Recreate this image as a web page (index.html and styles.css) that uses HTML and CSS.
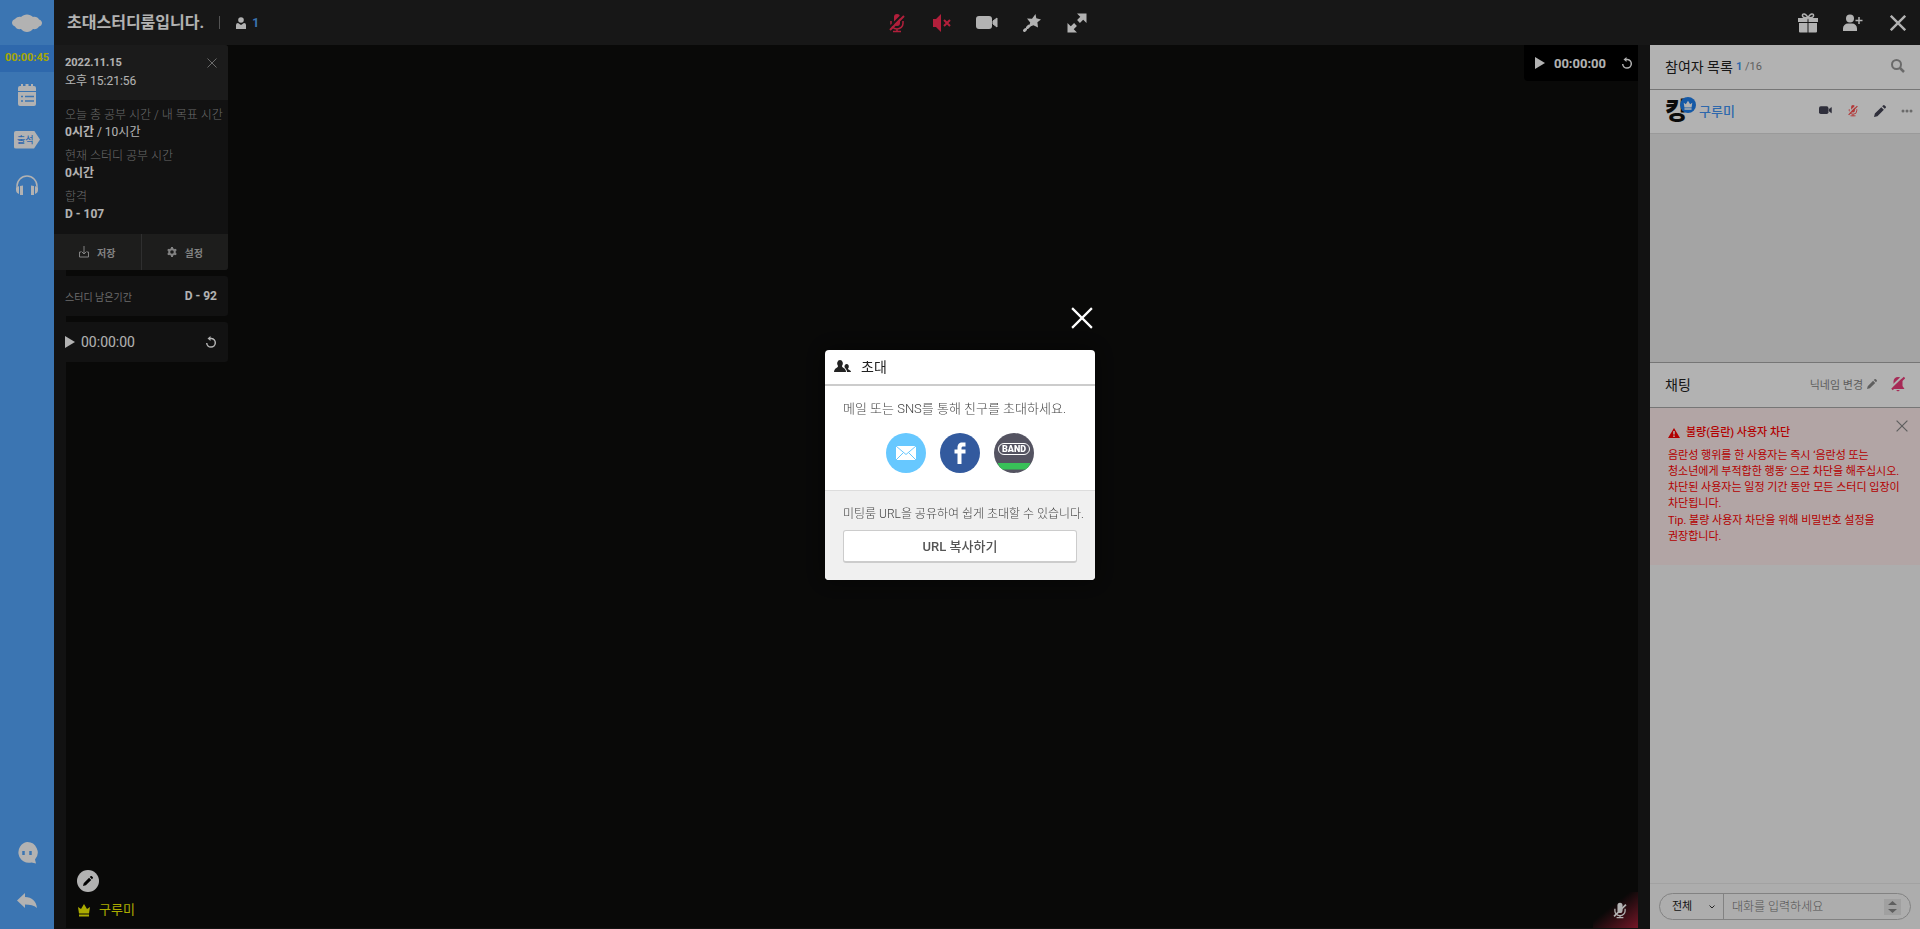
FILE: index.html
```
<!DOCTYPE html>
<html lang="ko">
<head>
    <meta charset="UTF-8">
    <meta name="viewport" content="width=device-width, initial-scale=1.0">
    <title>초대스터디룸입니다.</title>
    <link rel="stylesheet" href="styles.css">
</head>
<body>
    <!-- Shared icons -->
    <svg class="sprite" aria-hidden="true">
        <symbol id="mic-off" viewBox="0 0 16 20">
            <path d="M5 4a3 3 0 0 1 6 0v6a3 3 0 0 1-6 0z" fill="currentColor"/>
            <path d="M2 8v2.500a6 5.500 0 0 0 12 0V8M8 16v3M4 18.500h8" fill="none" stroke="currentColor" stroke-width="1.500"/>
            <path d="M0 15L14 1" stroke="var(--cut)" stroke-width="2"/>
            <path d="M1 17L15 3" stroke="currentColor" stroke-width="2"/>
        </symbol>
        <symbol id="camera" viewBox="0 0 22 14">
            <rect x="0" y="0" width="16" height="13" rx="3" fill="currentColor"/>
            <path d="M17 5l4-3v9l-4-3z" fill="currentColor" stroke="currentColor"/>
        </symbol>
        <symbol id="pencil" viewBox="0 0 14 14">
            <path d="M0 14l1-4 7.500-7.500 3 3L4 13zM9.500 1.500l1-1a1.500 1.500 0 0 1 2 0l1 1a1.500 1.500 0 0 1 0 2l-1 1z" fill="currentColor"/>
        </symbol>
        <symbol id="close" viewBox="0 0 20 20">
            <path d="M1 1l18 18M19 1L1 19" stroke="currentColor" stroke-width="var(--line, 2)" fill="none"/>
        </symbol>
        <symbol id="play" viewBox="0 0 10 12">
            <path d="M0 0l10 6-10 6z" fill="currentColor"/>
        </symbol>
        <symbol id="reset" viewBox="0 0 12 12">
            <path d="M4 2.500h2.500a4.300 4.300 0 1 1-4.800 4.500" fill="none" stroke="currentColor" stroke-width="1.500"/>
            <path d="M5.500 0v5L2.500 2.500z" fill="currentColor"/>
        </symbol>
        <symbol id="crown" viewBox="0 0 14 14">
            <path d="M1 4l3 2 3-5 3 5 3-2-1 6.500H2zM2 11.500h10V13.500H2z" fill="currentColor"/>
        </symbol>
    </svg>

    <div class="app">
        <!-- Left menu -->
        <nav class="sidebar">
            <a class="logo" href="#" aria-label="홈">
                <svg width="30" height="18" viewBox="0 0 30 18"><path d="M3 5c2-2 4-2.500 6-2 3-3.500 9-3.500 12 0 3-.5 5 .5 6 2.500 4 1 4 6 0 7-1 2-3.500 3-6 2.500-3 4-9 4-12 0-3 .5-5-.5-6-2.500-4-1.500-4-6 0-7.500z" fill="currentColor"/></svg>
            </a>
            <div class="elapsed">00:00:45</div>
            <div class="menu">
                <button aria-label="일정">
                    <svg width="18" height="22" viewBox="0 0 18 22">
                        <path d="M0 4a2 2 0 0 1 2-2h1V0h2v2h2.500V0h3v2H13V0h2v2h1a2 2 0 0 1 2 2v3H0zM0 8h18v12a2 2 0 0 1-2 2H2a2 2 0 0 1-2-2z" fill="currentColor"/>
                        <path d="M3 12.500h2M7 12.500h9M3 17h2M7 17h9" stroke="var(--cut)" stroke-width="1.500"/>
                    </svg>
                </button>
                <button class="attend"><span>출석</span></button>
                <button aria-label="음악">
                    <svg width="22" height="20" viewBox="0 0 22 20">
                        <path d="M1 15v-4a10 10 0 0 1 20 0v4" fill="none" stroke="currentColor" stroke-width="1.500"/>
                        <path d="M0 13l3-2v8c-2-1-3-2-3-4zM22 13l-3-2v8c2-1 3-2 3-4zM4 11l3-.500V20H4zM18 11l-3-.500V20h3z" fill="currentColor"/>
                    </svg>
                </button>
            </div>
            <div class="menu menu-bottom">
                <button aria-label="문의">
                    <svg width="22" height="22" viewBox="0 0 22 22">
                        <path d="M11 0a10.500 10.500 0 0 1 8 17.500l1 4-4.500-1A10.500 10.500 0 1 1 11 0z" fill="currentColor"/>
                        <path d="M7.500 9v4M14.500 9v4" stroke="var(--cut)" stroke-width="2.500"/>
                    </svg>
                </button>
                <button aria-label="뒤로">
                    <svg width="20" height="16" viewBox="0 0 20 16"><path d="M0 7.500L8 0v4c7 0 11 4 12 11-3-3-7-3.500-12-3.500V15z" fill="currentColor"/></svg>
                </button>
            </div>
        </nav>

        <div class="room">
            <!-- Top bar -->
            <header class="topbar">
                <div class="room-info">
                    <h1>초대스터디룸입니다.</h1>
                    <span class="divider"></span>
                    <svg width="12" height="12" viewBox="0 0 12 12"><circle cx="6" cy="3" r="2.800" fill="currentColor"/><path d="M1 12V8a2 2 0 0 1 2-2l3 2 3-2a2 2 0 0 1 2 2v4z" fill="currentColor"/></svg>
                    <span class="count">1</span>
                </div>
                <div class="tools">
                    <button class="off" aria-label="마이크"><svg width="16" height="20"><use href="#mic-off"/></svg></button>
                    <button class="off" aria-label="스피커">
                        <svg width="18" height="18" viewBox="0 0 18 18"><path d="M0 5h3l5-5v18l-5-5H0z" fill="currentColor"/><path d="M11 6l6 6M17 6l-6 6" stroke="currentColor" stroke-width="2"/></svg>
                    </button>
                    <button aria-label="카메라"><svg width="22" height="14"><use href="#camera"/></svg></button>
                    <button aria-label="필터">
                        <svg width="18" height="18" viewBox="0 0 18 18"><path d="M12.500 0l.8 4.300L18 5.500l-3.600 2.700.6 5.300-4.500-2.300L5.800 13l1.400-4.500L4 4.500l5 .2z" fill="currentColor"/><path d="M1.500 16.500l1-1M4.500 13.500l1.500-1.500" stroke="currentColor" stroke-width="3" stroke-linecap="round"/></svg>
                    </button>
                    <button aria-label="전체 화면">
                        <svg width="20" height="20" viewBox="0 0 20 20"><path d="M10 .500h9.500V10zM.500 10v9.500H10z" fill="currentColor"/><path d="M16 4l-4.500 4.500M8.500 11.500L4 16" stroke="currentColor" stroke-width="4"/></svg>
                    </button>
                </div>
                <div class="actions">
                    <button aria-label="선물">
                        <svg width="20" height="20" viewBox="0 0 20 20">
                            <path d="M0 5h9.500v4H0zM10.500 5H20v4h-9.500zM1 10h8.500v9.500H2a1 1 0 0 1-1-1zM10.500 10H19v8.500a1 1 0 0 1-1 1h-7.500z" fill="currentColor"/>
                            <path d="M10 5C8 0 4 0 4.500 3c.5 2 4 2 5.500 2 1.500 0 5 0 5.500-2C16 0 12 0 10 5z" fill="none" stroke="currentColor" stroke-width="1.500"/>
                        </svg>
                    </button>
                    <button aria-label="초대">
                        <svg width="20" height="18" viewBox="0 0 20 18"><circle cx="7" cy="4.500" r="4" fill="currentColor"/><path d="M0 17v-2.500a5 5 0 0 1 5-5h4a5 5 0 0 1 5 5V17z" fill="currentColor"/><path d="M16 3v7M12.500 6.500h7" stroke="currentColor" stroke-width="1.500"/></svg>
                    </button>
                    <button class="leave" aria-label="나가기"><svg width="16" height="16"><use href="#close"/></svg></button>
                </div>
            </header>

            <div class="content">
                <main class="video">
                    <!-- Study widgets -->
                    <div class="widgets">
                        <section class="study">
                            <div class="study-head">
                                <strong>2022.11.15</strong>
                                <span>오후 15:21:56</span>
                                <button class="study-close" aria-label="닫기"><svg width="10" height="10"><use href="#close"/></svg></button>
                            </div>
                            <dl class="study-body">
                                <div><dt>오늘 총 공부 시간 / 내 목표 시간</dt><dd><b>0시간</b> / 10시간</dd></div>
                                <div><dt>현재 스터디 공부 시간</dt><dd><b>0시간</b></dd></div>
                                <div><dt>합격</dt><dd><b>D - 107</b></dd></div>
                            </dl>
                            <div class="study-buttons">
                                <button>
                                    <svg width="10" height="12" viewBox="0 0 10 12"><path d="M2 6H.500v5h9V6H8M5 0v8M2.500 5.500L5 8l2.500-2.500" fill="none" stroke="currentColor"/></svg>
                                    저장
                                </button>
                                <button>
                                    <svg width="10" height="10" viewBox="0 0 10 10"><circle cx="5" cy="5" r="2.800" fill="none" stroke="currentColor" stroke-width="2"/><path d="M5 0v2M5 8v2M.700 2.500l1.700 1M7.600 6.500l1.700 1M.700 7.500l1.700-1M7.600 3.500l1.700-1" stroke="currentColor" stroke-width="2"/></svg>
                                    설정
                                </button>
                            </div>
                        </section>
                        <section class="remain">
                            <span>스터디 남은기간</span>
                            <strong>D - 92</strong>
                        </section>
                        <section class="stopwatch">
                            <button aria-label="시작"><svg width="10" height="12"><use href="#play"/></svg></button>
                            <span>00:00:00</span>
                            <button class="reset" aria-label="초기화"><svg width="12" height="12"><use href="#reset"/></svg></button>
                        </section>
                    </div>

                    <div class="video-timer">
                        <button aria-label="시작"><svg width="10" height="12"><use href="#play"/></svg></button>
                        <span>00:00:00</span>
                        <button aria-label="초기화"><svg width="12" height="12"><use href="#reset"/></svg></button>
                    </div>

                    <div class="video-user">
                        <button class="edit" aria-label="수정"><svg width="10" height="10"><use href="#pencil"/></svg></button>
                        <div class="nick"><svg width="14" height="14"><use href="#crown"/></svg>구루미</div>
                    </div>
                    <div class="muted"><svg width="14" height="17"><use href="#mic-off"/></svg></div>
                </main>

                <!-- Right panel -->
                <aside class="panel">
                    <div class="panel-head">
                        <h2>참여자 목록</h2>
                        <span class="people"><b>1</b> /16</span>
                        <button class="search" aria-label="검색">
                            <svg width="14" height="14" viewBox="0 0 14 14"><circle cx="5.500" cy="5.500" r="4.500" fill="none" stroke="currentColor" stroke-width="2"/><path d="M9 9l4 4" stroke="currentColor" stroke-width="2.500"/></svg>
                        </button>
                    </div>
                    <ul class="members">
                        <li>
                            <span class="avatar">킹<i><svg width="10" height="10"><use href="#crown"/></svg></i></span>
                            <span class="name">구루미</span>
                            <button aria-label="카메라"><svg width="13" height="9"><use href="#camera"/></svg></button>
                            <button class="mic" aria-label="마이크"><svg width="10" height="13"><use href="#mic-off"/></svg></button>
                            <button aria-label="수정"><svg width="12" height="12"><use href="#pencil"/></svg></button>
                            <button class="more" aria-label="더보기"><svg width="12" height="4" viewBox="0 0 12 4"><circle cx="2" cy="2" r="1.500"/><circle cx="6" cy="2" r="1.500"/><circle cx="10" cy="2" r="1.500"/></svg></button>
                        </li>
                    </ul>

                    <section class="chat">
                        <div class="panel-head">
                            <h2>채팅</h2>
                            <button class="rename">닉네임 변경 <svg width="10" height="10"><use href="#pencil"/></svg></button>
                            <button class="bell" aria-label="알림">
                                <svg width="14" height="16" viewBox="0 0 14 16">
                                    <path d="M7 1a4.500 4.500 0 0 1 4.500 4.500V10l2 3h-13l2-3V5.500A4.500 4.500 0 0 1 7 1zM5 14h4l-2 1.500z" fill="currentColor"/>
                                    <path d="M0 11.500L12 0" stroke="var(--cut)" stroke-width="2"/>
                                    <path d="M1 13.500L13.500 1.500" stroke="currentColor" stroke-width="2"/>
                                </svg>
                            </button>
                        </div>
                        <div class="notice">
                            <h3><svg width="12" height="10" viewBox="0 0 12 10"><path d="M6 0l6 10H0z" fill="currentColor"/><path d="M6 3v3.500M6 7.500v1.500" stroke="var(--cut)" stroke-width="1.500"/></svg>불량(음란) 사용자 차단</h3>
                            <p>음란성 행위를 한 사용자는 즉시 ‘음란성 또는<br>청소년에게 부적합한 행동’ 으로 차단을 해주십시오.<br>차단된 사용자는 일정 기간 동안 모든 스터디 입장이<br>차단됩니다.</p>
                            <p>Tip. 불량 사용자 차단을 위해 비밀번호 설정을<br>권장합니다.</p>
                            <button class="notice-close" aria-label="닫기"><svg width="12" height="12"><use href="#close"/></svg></button>
                        </div>
                        <div class="messages"></div>
                        <form class="chat-form">
                            <div class="chat-box">
                                <select aria-label="받는 사람"><option>전체</option></select>
                                <input type="text" placeholder="대화를 입력하세요" aria-label="대화">
                                <svg class="scroller" width="17" height="16" viewBox="0 0 17 16"><path d="M0 0h17v16H0z" fill="#e6e6e6"/><path d="M4 6l4.500-4L13 6zM4 10l4.500 4 4.500-4z" fill="#888"/></svg>
                            </div>
                        </form>
                    </section>
                </aside>
            </div>
        </div>
    </div>

    <!-- Invite popup -->
    <div class="dim">
        <div class="popup" role="dialog" aria-labelledby="popup-title">
            <button class="popup-close" aria-label="닫기"><svg width="22" height="22"><use href="#close"/></svg></button>
            <div class="popup-head">
                <svg width="17" height="13" viewBox="0 0 17 13"><path d="M6 0a3 3.500 0 0 1 2 6c0 2 4 2 4 6H0c0-4 4-4 4-6a3 3.500 0 0 1 2-6zM12.500 4a2 2.500 0 0 1 1.500 4.500c0 1.500 3 1.500 3 3.500h-4c0-2-1-3-2-4a2.500 2.500 0 0 1 1.500-4z" fill="currentColor"/></svg>
                <h2 id="popup-title">초대</h2>
            </div>
            <div class="popup-body">
                <p>메일 또는 SNS를 통해 친구를 초대하세요.</p>
                <div class="share">
                    <a href="#" aria-label="메일">
                        <svg width="40" height="40" viewBox="0 0 40 40"><circle cx="20" cy="20" r="20" fill="#67c8ff"/><path d="M10 13h20v14H10z" fill="#fff"/><path d="M10 13l10 8.500L30 13M10 27l7.500-7.500M30 27l-7.500-7.500" fill="none" stroke="#67c8ff"/></svg>
                    </a>
                    <a href="#" aria-label="페이스북">
                        <svg width="40" height="40" viewBox="0 0 40 40"><circle cx="20" cy="20" r="20" fill="#335a9e"/><path d="M17.500 31V20.500h-3v-4h3V15c0-4 2-5.500 4.500-5.500h3.500v4H23.500c-1.500 0-2 .500-2 2v1h4v4h-4V31z" fill="#fff"/></svg>
                    </a>
                    <a href="#" aria-label="밴드">
                        <svg width="40" height="40" viewBox="0 0 40 40"><circle cx="20" cy="20" r="20" fill="#545361"/><path d="M3.500 30h33q-1.500 4-5 6.500h-23Q5 34 3.500 30z" fill="#38c058"/><rect x="4.500" y="10.500" width="31" height="11" rx="5.500" fill="none" stroke="#fff"/><text x="20" y="19" class="band">BAND</text></svg>
                    </a>
                </div>
            </div>
            <div class="popup-foot">
                <p>미팅룸 URL을 공유하여 쉽게 초대할 수 있습니다.</p>
                <button class="copy">URL 복사하기</button>
            </div>
        </div>
    </div>
</body>
</html>
```
FILE: styles.css
```
* {
    box-sizing: border-box;
}
body {
    margin: 0;
    font-family: Roboto, "Noto Sans CJK KR", sans-serif;
    font-size: 12px;
    color: #fff;
    background: #1a1a1a;
}
h1, h2, h3, p, ul, dl, dd {
    margin: 0;
    padding: 0;
}
button {
    display: flex;
    align-items: center;
    justify-content: center;
    margin: 0;
    padding: 0;
    border: 0;
    background: none;
    color: inherit;
    font: inherit;
    cursor: pointer;
}
svg {
    display: block;
    flex: none;
}
.sprite {
    position: absolute;
    width: 0;
    height: 0;
}
.app {
    display: flex;
    height: 100vh;
}

/* left menu */
.sidebar {
    --cut: #55a8ff;
    display: flex;
    flex-direction: column;
    width: 54px;
    flex: none;
    background: #55a8ff;
}
.logo {
    display: flex;
    align-items: center;
    justify-content: center;
    height: 45px;
    color: #fff;
}
.elapsed {
    height: 27px;
    line-height: 26px;
    text-align: center;
    font-weight: 700;
    font-size: 11px;
    color: #f0f000;
    background: #4396f7;
}
.menu button {
    width: 100%;
    height: 45px;
}
.menu-bottom {
    margin-top: auto;
    padding-bottom: 4px;
}
.menu-bottom button {
    height: 48px;
}
.attend span {
    width: 26px;
    height: 18px;
    padding-left: 3px;
    line-height: 18px;
    text-align: left;
    font-size: 9px;
    font-weight: 500;
    color: #4396f7;
    background: #fff;
    border-radius: 2px;
    clip-path: polygon(0 0, 77% 0, 100% 50%, 77% 100%, 0 100%);
}

/* top bar */
.room {
    display: flex;
    flex-direction: column;
    flex: 1;
    min-width: 0;
}
.topbar {
    --cut: #222;
    display: grid;
    grid-template-columns: 1fr auto 1fr;
    align-items: center;
    height: 45px;
    background: #222;
}
.room-info {
    display: flex;
    align-items: center;
    padding-left: 13px;
}
.room-info h1 {
    font-size: 16px;
    font-weight: 700;
    line-height: 24px;
}
.divider {
    width: 1px;
    height: 13px;
    margin: 0 15px;
    background: #777;
}
.count {
    margin-left: 5px;
    color: #55a8ff;
    font-weight: 700;
}
.tools, .actions {
    display: flex;
}
.tools button, .actions button {
    width: 45px;
    height: 45px;
}
.actions {
    justify-content: flex-end;
}
.leave {
    --line: 3;
}
.off {
    color: #ff2d55;
}

/* video */
.content {
    display: flex;
    flex: 1;
    min-height: 0;
}
.video {
    --cut: transparent;
    position: relative;
    flex: 1;
    margin: 0 12px 1px;
    background: #0d0d0c;
}
.widgets {
    position: absolute;
    top: 0;
    left: -12px;
    display: flex;
    flex-direction: column;
    gap: 6px;
    width: 174px;
}
.widgets section {
    background: #1a1a1a;
    border-radius: 0 3px 3px 0;
    overflow: hidden;
}
.study-head {
    position: relative;
    padding: 9px 11px 10px;
    line-height: 18px;
    background: #282827;
}
.study-head strong, .study-head span {
    display: block;
}
.study-head strong {
    font-size: 11px;
}
.study-close {
    --line: 2;
    position: absolute;
    top: 13px;
    right: 11px;
    color: #999;
}
.study-body {
    display: grid;
    gap: 7px;
    padding: 7px 11px 11px;
}
.study-body dt {
    line-height: 16px;
    font-weight: 300;
    color: #999;
    white-space: nowrap;
}
.study-body dd {
    line-height: 18px;
}
.study-body b {
    font-weight: 700;
}
.study-buttons {
    display: flex;
    background: #2a2a29;
}
.study-buttons button {
    flex: 1;
    gap: 8px;
    height: 36px;
    font-size: 10px;
    font-weight: 700;
    color: #bbb;
}
.study-buttons button + button {
    border-left: 1px solid #444;
}
.widgets .remain, .widgets .stopwatch {
    display: flex;
    align-items: center;
    height: 40px;
    padding: 0 11px;
}
.remain {
    justify-content: space-between;
}
.remain span {
    font-size: 10px;
    color: #999;
}
.stopwatch span {
    margin-left: 6px;
    font-size: 14px;
}
.stopwatch .reset {
    margin-left: auto;
}
.video-timer {
    position: absolute;
    top: 0;
    right: 0;
    display: flex;
    align-items: center;
    gap: 9px;
    height: 36px;
    padding: 0 5px 0 11px;
    font-weight: 700;
    font-size: 13px;
    background: #000;
    border-bottom-left-radius: 4px;
}
.video-timer span {
    margin-right: 6px;
}
.video-user {
    position: absolute;
    left: 11px;
    bottom: 8px;
}
.edit {
    width: 22px;
    height: 22px;
    margin-bottom: 8px;
    border-radius: 50%;
    color: #000;
    background: #fff;
}
.nick {
    display: flex;
    align-items: center;
    gap: 8px;
    font-size: 13px;
    line-height: 20px;
    color: #f5f500;
}
.muted {
    position: absolute;
    right: 0;
    bottom: 0;
    display: flex;
    align-items: flex-end;
    justify-content: flex-end;
    width: 45px;
    height: 36px;
    padding: 0 11px 9px 0;
    background: linear-gradient(to bottom right, transparent 40%, #a82038);
}

/* right panel */
.panel {
    --cut: #fff;
    display: flex;
    flex-direction: column;
    width: 270px;
    flex: none;
    color: #222;
    background: #ebebeb;
}
.panel-head {
    display: flex;
    align-items: center;
    height: 45px;
    padding: 0 15px 2px;
    background: #fff;
    border-bottom: 1px solid #aaa;
}
.panel-head h2 {
    font-size: 14px;
    font-weight: 400;
}
.people {
    margin-left: 3px;
    font-size: 11px;
    color: #888;
}
.people b {
    color: #4396f7;
}
.search {
    margin-left: auto;
    color: #999;
}
.members {
    height: 272px;
    list-style: none;
}
.members li {
    display: flex;
    align-items: center;
    height: 44px;
    padding: 0 0 2px 15px;
    background: #fff;
    border-bottom: 1px solid #ddd;
    color: #445;
}
.members button {
    width: 27px;
    height: 27px;
}
.avatar {
    position: relative;
    width: 26px;
    height: 26px;
    font-size: 24px;
    line-height: 26px;
    font-weight: 900;
    color: #111;
}
.avatar i {
    position: absolute;
    top: -1px;
    left: 15px;
    display: flex;
    align-items: center;
    justify-content: center;
    width: 16px;
    height: 16px;
    border-radius: 50%;
    color: #fff;
    background: #1f80ee;
}
.members .name {
    margin: 0 auto 0 8px;
    font-size: 13px;
    font-weight: 500;
    color: #4396f7;
}
.members .mic {
    color: #ff5050;
}
.members .more {
    fill: #999;
}
.chat {
    display: flex;
    flex-direction: column;
    flex: 1;
    background: #f8f8f8;
    border-top: 1px solid #aaa;
}
.rename {
    gap: 4px;
    margin-left: auto;
    font-size: 11px;
    color: #888;
}
.bell {
    margin-left: 14px;
    color: #ee3d7c;
}
.notice {
    --cut: #fff;
    position: relative;
    min-height: 157px;
    padding: 17px 18px 0;
    line-height: 16px;
    font-size: 11px;
    color: #f00;
    background: #ffecec;
}
.notice h3 {
    display: flex;
    align-items: center;
    gap: 6px;
    margin-bottom: 7px;
    font-size: 11px;
    font-weight: 500;
}
.notice p {
    white-space: nowrap;
}
.notice p + p {
    margin-top: 1px;
}
.notice-close {
    --line: 2;
    position: absolute;
    top: 12px;
    right: 12px;
    color: #888;
}
.messages {
    flex: 1;
}
.chat-form {
    padding: 9px;
    border-top: 1px solid #e8e8e8;
}
.chat-box {
    display: flex;
    align-items: center;
    height: 27px;
    padding-right: 9px;
    border: 1px solid #bbb;
    border-radius: 14px;
}
.chat-box select {
    appearance: none;
    width: 64px;
    height: 25px;
    padding: 0 0 0 12px;
    border: 0;
    border-right: 1px solid #bbb;
    font: inherit;
    font-size: 11px;
    color: #222;
    background: url("data:image/svg+xml,%3Csvg xmlns='http://www.w3.org/2000/svg' width='6' height='4'%3E%3Cpath d='M.5 .5L3 3 5.500 .5' fill='none' stroke='%23333'/%3E%3C/svg%3E") no-repeat right 8px center;
}
.chat-box input {
    flex: 1;
    min-width: 0;
    padding: 0 8px;
    border: 0;
    outline: 0;
    font: inherit;
    background: none;
}
.chat-box input::placeholder {
    font-weight: 300;
    color: #777;
}

/* invite popup */
.dim {
    position: fixed;
    inset: 0;
    display: flex;
    align-items: center;
    justify-content: center;
    background: rgba(0, 0, 0, 0.3);
}
.popup {
    position: relative;
    width: 270px;
    color: #222;
    background: #fff;
    border-radius: 4px;
    box-shadow: 0 0 20px rgba(0, 0, 0, 0.5);
}
.popup-close {
    --line: 2;
    position: absolute;
    top: -43px;
    right: 2px;
    color: #fff;
}
.popup-head {
    display: flex;
    align-items: center;
    gap: 10px;
    height: 36px;
    padding: 0 9px 1px;
    border-bottom: 2px solid #ccc;
}
.popup-head h2 {
    font-size: 14px;
    font-weight: 400;
}
.popup-body {
    padding: 13px 18px 17px;
}
.popup-body p {
    font-size: 13px;
    line-height: 20px;
    font-weight: 300;
    color: #444;
    white-space: nowrap;
}
.share {
    display: flex;
    justify-content: center;
    gap: 14px;
    margin-top: 14px;
}
.band {
    font-size: 9px;
    font-weight: 900;
    text-anchor: middle;
    fill: #fff;
}
.popup-foot {
    padding: 14px 18px 17px;
    background: #f0f0f0;
    border-top: 1px solid #ddd;
    border-radius: 0 0 4px 4px;
}
.popup-foot p {
    line-height: 18px;
    font-weight: 300;
    color: #444;
    white-space: nowrap;
}
.copy {
    width: 100%;
    height: 33px;
    margin-top: 7px;
    font-size: 13px;
    font-weight: 500;
    color: #555;
    background: #fff;
    border: 1px solid #ccc;
    border-bottom-width: 2px;
    border-radius: 3px;
}
```
